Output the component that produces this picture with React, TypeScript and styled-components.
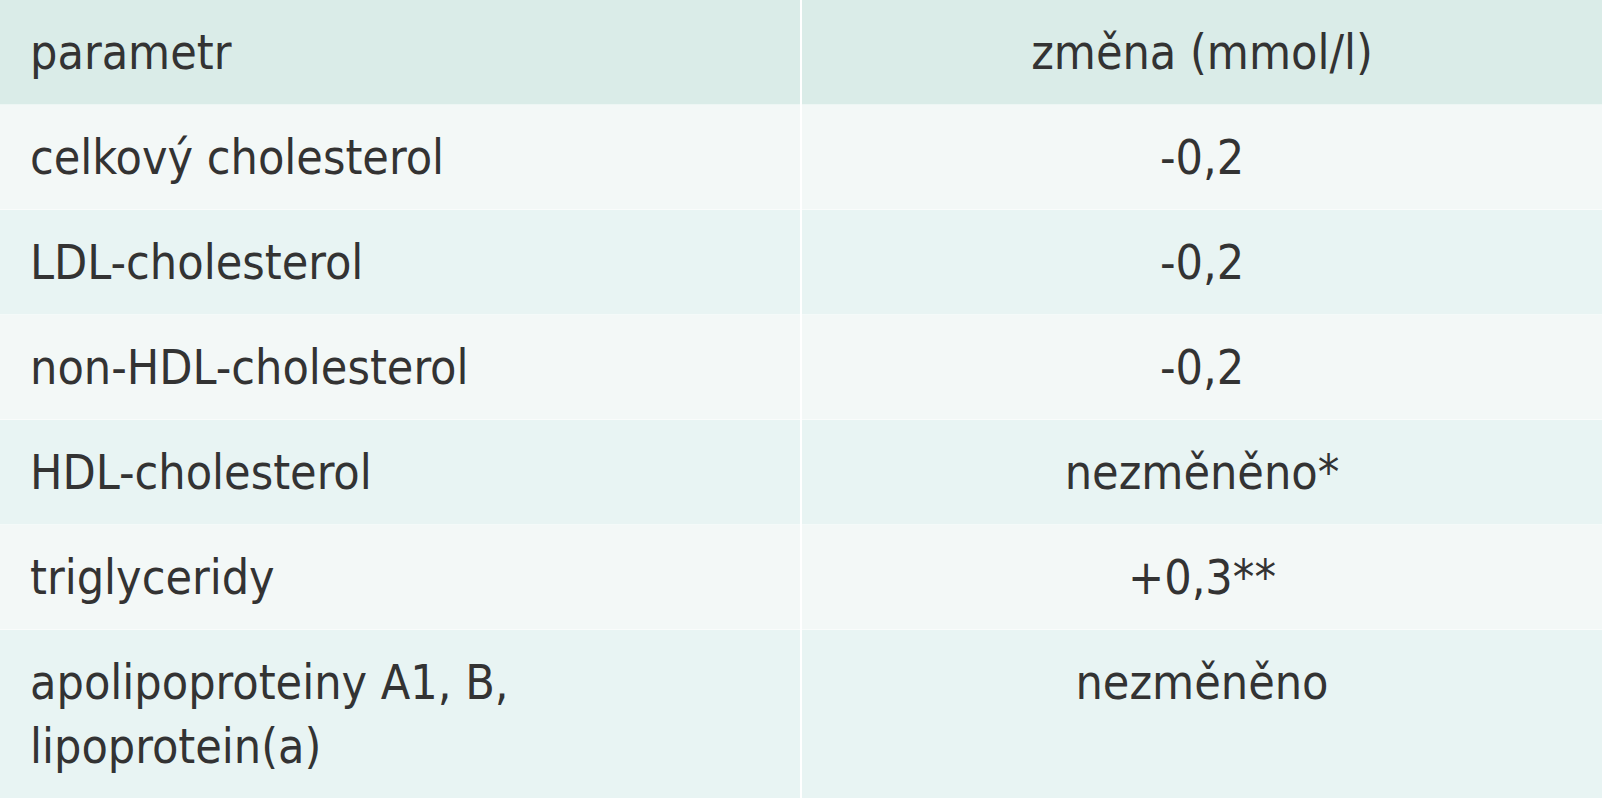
import React from "react";
import styled, { createGlobalStyle } from "styled-components";

interface Row {
  param: React.ReactNode;
  change: string;
}

const rows: Row[] = [
  { param: "celkový cholesterol", change: "-0,2" },
  { param: "LDL-cholesterol", change: "-0,2" },
  { param: "non-HDL-cholesterol", change: "-0,2" },
  { param: "HDL-cholesterol", change: "nezměněno*" },
  { param: "triglyceridy", change: "+0,3**" },
  {
    param: (
      <>
        apolipoproteiny A1, B,
        <br />
        lipoprotein(a)
      </>
    ),
    change: "nezměněno",
  },
];

const App: React.FC = () => {
  return (
    <>
      <GlobalStyle />
      <Table>
        <thead>
          <HeadRow>
            <HeadCell>parametr</HeadCell>
            <HeadCell center>změna (mmol/l)</HeadCell>
          </HeadRow>
        </thead>
        <tbody>
          {rows.map((row, i) => (
            <BodyRow key={i} even={i % 2 === 1}>
              <Cell>{row.param}</Cell>
              <Cell center>{row.change}</Cell>
            </BodyRow>
          ))}
        </tbody>
      </Table>
    </>
  );
};

export default App;

const GlobalStyle = createGlobalStyle`
  html, body {
    margin: 0;
    padding: 0;
    background: #ffffff;
  }
  body {
    font-family: "Liberation Sans Narrow", "DejaVu Sans Condensed", "Liberation Sans", sans-serif;
    color: #333333;
  }
`;

const Table = styled.table`
  width: 1602px;
  border-collapse: collapse;
  table-layout: fixed;
`;

const HeadRow = styled.tr`
  background: #daece8;
`;

const BodyRow = styled.tr<{ even: boolean }>`
  background: ${({ even }) => (even ? "#e8f4f3" : "#f3f8f7")};
`;

const HeadCell = styled.th<{ center?: boolean }>`
  width: 50%;
  height: 104px;
  box-sizing: border-box;
  padding: 20px 30px;
  font-size: 48px;
  line-height: 64px;
  font-weight: 400;
  text-align: ${({ center }) => (center ? "center" : "left")};
  vertical-align: middle;

  &:first-child {
    border-right: 2px solid #ffffff;
  }
`;

const Cell = styled.td<{ center?: boolean }>`
  padding: 20px 30px;
  font-size: 48px;
  line-height: 64px;
  text-align: ${({ center }) => (center ? "center" : "left")};
  vertical-align: top;
  border-top: 1px solid rgba(255, 255, 255, 0.5);

  &:first-child {
    border-right: 2px solid #ffffff;
  }
`;
